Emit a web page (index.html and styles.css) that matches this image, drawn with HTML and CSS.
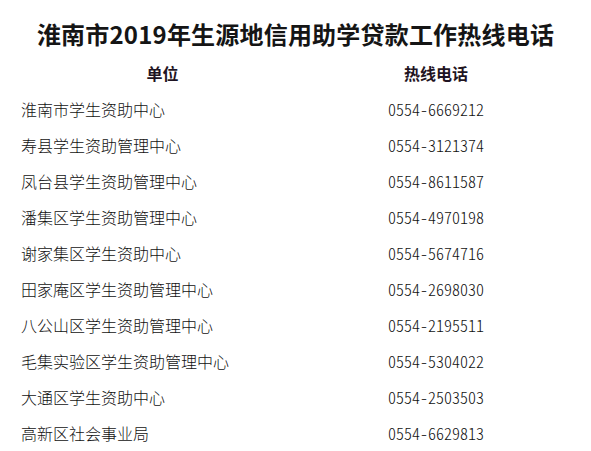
FILE: index.html
```html
<!DOCTYPE html>
<html lang="zh-CN">
<head>
<meta charset="utf-8">
<title>淮南市2019年生源地信用助学贷款工作热线电话</title>
<link rel="stylesheet" href="styles.css">
</head>
<body>
<main class="page">
  <h1 class="title">淮南市2019年生源地信用助学贷款工作热线电话</h1>
  <div class="table">
    <div class="head unit">单位</div>
    <div class="head phone-head">热线电话</div>

    <div class="cell name">淮南市学生资助中心</div>
    <div class="cell tel"><span class="num">0554-6669212</span></div>

    <div class="cell name">寿县学生资助管理中心</div>
    <div class="cell tel"><span class="num">0554-3121374</span></div>

    <div class="cell name">凤台县学生资助管理中心</div>
    <div class="cell tel"><span class="num">0554-8611587</span></div>

    <div class="cell name">潘集区学生资助管理中心</div>
    <div class="cell tel"><span class="num">0554-4970198</span></div>

    <div class="cell name">谢家集区学生资助中心</div>
    <div class="cell tel"><span class="num">0554-5674716</span></div>

    <div class="cell name">田家庵区学生资助管理中心</div>
    <div class="cell tel"><span class="num">0554-2698030</span></div>

    <div class="cell name">八公山区学生资助管理中心</div>
    <div class="cell tel"><span class="num">0554-2195511</span></div>

    <div class="cell name">毛集实验区学生资助管理中心</div>
    <div class="cell tel"><span class="num">0554-5304022</span></div>

    <div class="cell name">大通区学生资助中心</div>
    <div class="cell tel"><span class="num">0554-2503503</span></div>

    <div class="cell name">高新区社会事业局</div>
    <div class="cell tel"><span class="num">0554-6629813</span></div>
  </div>
</main>
</body>
</html>
```

FILE: styles.css
```css
html, body {
  margin: 0;
  padding: 0;
  background: #ffffff;
}

body {
  font-family: "Noto Sans CJK SC", "Noto Sans", sans-serif;
  color: #111111;
}

.page {
  width: 591px;
  height: 451px;
  overflow: hidden;
  padding-top: 18px;
  box-sizing: border-box;
}

.title {
  margin: 0;
  font-size: 24px;
  line-height: 32px;
  font-weight: 700;
  text-align: center;
  letter-spacing: 0.2px;
  color: #151515;
}

.table {
  margin: 5px 0 0 20px;
  display: grid;
  grid-template-columns: 285px 262px;
  grid-auto-rows: 36px;
}

.head {
  font-size: 16px;
  line-height: 36px;
  font-weight: 700;
  text-align: center;
  color: #1f1422;
}

.cell {
  font-size: 16px;
  line-height: 36px;
}

.name {
  padding-left: 1px;
  font-weight: 300;
  color: #111111;
}

.tel {
  text-align: center;
}

.num {
  display: inline-block;
  font-family: "Noto Sans CJK SC", monospace;
  font-size: 16px;
  font-weight: 300;
  font-feature-settings: "hwid" 1;
  color: #111111;
}
```
